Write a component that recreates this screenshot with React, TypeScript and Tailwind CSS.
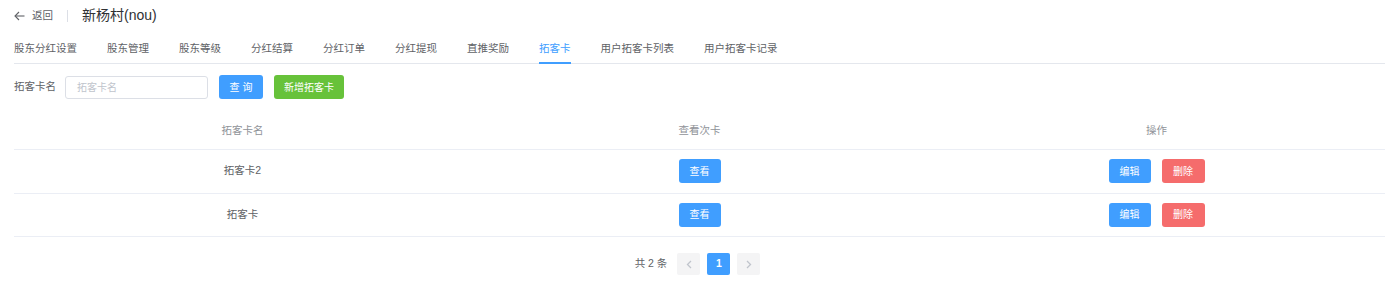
import React from "react";

const FONT = '"Liberation Sans", "Noto Sans CJK SC", Arial, sans-serif';

const tabs = [
  "股东分红设置",
  "股东管理",
  "股东等级",
  "分红结算",
  "分红订单",
  "分红提现",
  "直推奖励",
  "拓客卡",
  "用户拓客卡列表",
  "用户拓客卡记录",
];

const rows = ["拓客卡2", "拓客卡"];

function Btn({ color, children, w }: { color: string; children: React.ReactNode; w: string }) {
  return (
    <button
      className={`${color} ${w} h-[24px] rounded-[3px] text-white text-[10px] flex items-center justify-center`}
    >
      {children}
    </button>
  );
}

export default function App() {
  return (
    <div className="w-full h-[305px] bg-white text-[#606266]" style={{ fontFamily: FONT }}>
      <div className="pl-[14px] pr-[4px]">
        {/* header */}
        <div className="h-[31px] flex items-center">
          <div className="flex items-center gap-[7px] text-[10.5px] text-[#606266]">
            <svg width="11" height="10" viewBox="0 0 11 10" fill="none" stroke="#606266" strokeWidth="1.1">
              <path d="M10.5 5H1" />
              <path d="M5 1L1 5l4 4" />
            </svg>
            <span>返回</span>
          </div>
          <div className="w-px h-[12px] bg-[#dcdfe6] ml-[14px] mr-[14px]" />
          <span className="text-[14px] text-[#303133]">新杨村(nou)</span>
        </div>

        {/* tabs */}
        <div className="mt-[5px] flex border-b border-[#e4e7ed] h-[28px]">
          {tabs.map((t, i) => (
            <div
              key={t}
              className={`relative h-full flex items-center text-[10.5px] ${i === 0 ? "pr-[15px]" : "px-[15px]"} ${
                t === "拓客卡" ? "text-[#409eff]" : "text-[#606266]"
              }`}
            >
              <span className="-mt-[1px]">{t}</span>
              {t === "拓客卡" && (
                <div className="absolute left-[15px] right-[15px] bottom-[-1px] h-[2px] bg-[#409eff]" />
              )}
            </div>
          ))}
        </div>

        {/* filter */}
        <div className="mt-[11px] flex items-center h-[24px]">
          <span className="text-[10.5px] text-[#606266]">拓客卡名</span>
          <div className="ml-[9px] w-[143px] h-[23px] border border-[#dcdfe6] rounded-[3px] flex items-center pl-[11px] text-[10px] text-[#c0c4cc]">
            拓客卡名
          </div>
          <div className="ml-[11px]">
            <Btn color="bg-[#409eff]" w="w-[44px]">查 询</Btn>
          </div>
          <div className="ml-[11px]">
            <Btn color="bg-[#67c23a]" w="w-[70px]">新增拓客卡</Btn>
          </div>
        </div>

        {/* table */}
        <div className="mt-[14px]">
          <div className="grid grid-cols-3 h-[37px] items-center border-b border-[#ebeef5] text-[10.5px] text-[#909399]">
            <div className="text-center">拓客卡名</div>
            <div className="text-center">查看次卡</div>
            <div className="text-center">操作</div>
          </div>
          {rows.map((r) => (
            <div
              key={r}
              className="grid grid-cols-3 h-[43.5px] items-center border-b border-[#ebeef5] text-[10.5px] text-[#606266]"
            >
              <div className="text-center">{r}</div>
              <div className="flex justify-center">
                <Btn color="bg-[#409eff]" w="w-[42px]">查看</Btn>
              </div>
              <div className="flex justify-center gap-[11px]">
                <Btn color="bg-[#409eff]" w="w-[42px]">编辑</Btn>
                <Btn color="bg-[#f56c6c]" w="w-[43px]">删除</Btn>
              </div>
            </div>
          ))}
        </div>

        {/* pagination */}
        <div className="mt-[16px] pr-[4px] flex justify-center items-center">
          <span className="text-[10.5px] text-[#606266] mr-[10px]">共 2 条</span>
          <div className="w-[23px] h-[22px] bg-[#f4f4f5] rounded-[2px] flex items-center justify-center">
            <svg width="6" height="9" viewBox="0 0 6 9" fill="none" stroke="#c0c4cc" strokeWidth="1.3">
              <path d="M5 1L1.5 4.5 5 8" />
            </svg>
          </div>
          <div className="ml-[7px] w-[23px] h-[22px] bg-[#409eff] rounded-[2px] flex items-center justify-center text-white text-[10.5px] font-bold">
            1
          </div>
          <div className="ml-[7px] w-[23px] h-[22px] bg-[#f4f4f5] rounded-[2px] flex items-center justify-center">
            <svg width="6" height="9" viewBox="0 0 6 9" fill="none" stroke="#c0c4cc" strokeWidth="1.3">
              <path d="M1 1l3.5 3.5L1 8" />
            </svg>
          </div>
        </div>
      </div>
    </div>
  );
}
